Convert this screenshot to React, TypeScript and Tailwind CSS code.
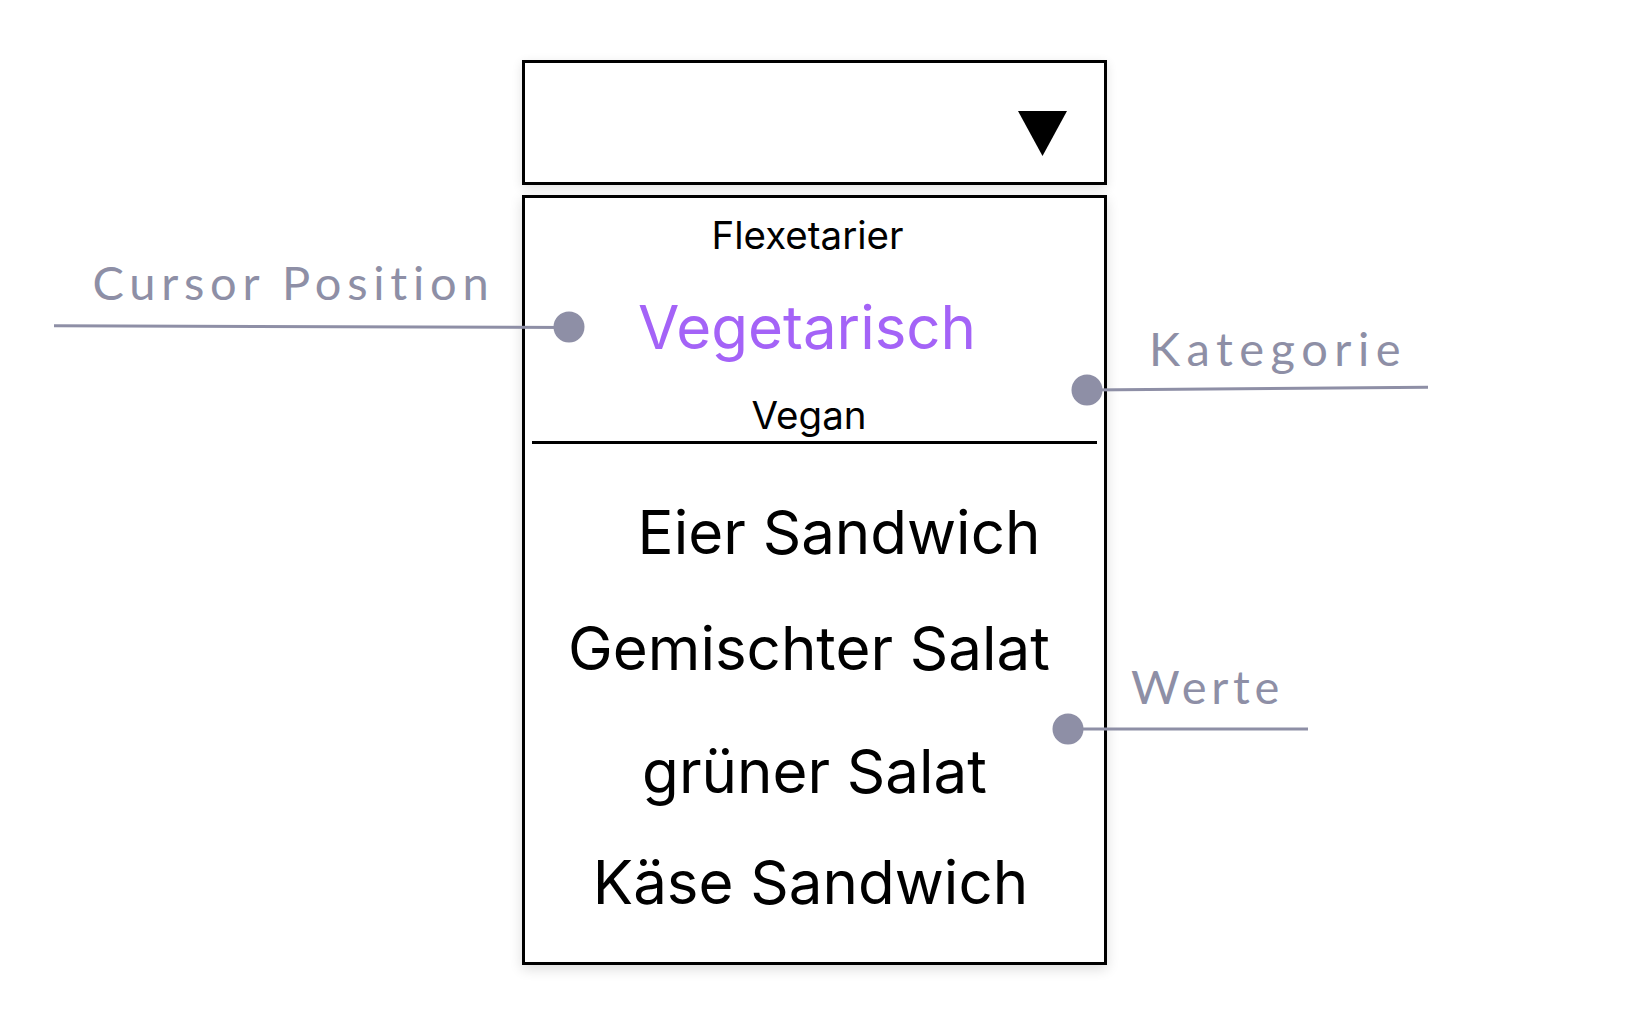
import React from "react";

const inter = { fontFamily: "Inter, 'Noto Sans', sans-serif" };
const label = { fontFamily: "Lato, 'Open Sans', sans-serif" };

function SelectBox() {
  return (
    <div className="flex h-[125px] justify-end border-[3px] border-black bg-white pr-[37px] pt-[48px] shadow-[0_3px_10px_rgba(0,0,0,0.12)]">
      {/* Dropdown arrow */}
      <svg width="49" height="45" viewBox="0 0 49 45">
        <polygon points="0,0 49,0 24.5,45" fill="#000" />
      </svg>
    </div>
  );
}

function ListBox() {
  return (
    <div
      className="mt-[10px] flex h-[770px] flex-col border-[3px] border-black bg-white text-center text-black shadow-[0_4px_12px_rgba(0,0,0,0.14)]"
      style={inter}
    >
      {/* Kategorien */}
      <div className="mt-[18px] pr-[14px] text-[38.5px] leading-none">Flexetarier</div>
      <div className="mt-[42px] pr-[15px] text-[60px] leading-none text-[#a463f7]">Vegetarisch</div>
      <div className="mt-[39px] pr-[11px] text-[38.5px] leading-none">Vegan</div>
      <div className="mx-[7px] mt-[6.5px] h-[3px] bg-black" />

      {/* Werte */}
      <div className="mt-[58.4px] pl-[49px] text-[60px] leading-none">Eier Sandwich</div>
      <div className="mt-[56.6px] pr-[11px] text-[60px] leading-none">Gemischter Salat</div>
      <div className="mt-[63px] text-[60px] leading-none">grüner Salat</div>
      <div className="mt-[51px] pr-[8px] text-[60px] leading-none">Käse Sandwich</div>
    </div>
  );
}

function Annotations() {
  const c = "#8e8fa6";
  return (
    <>
      <svg className="pointer-events-none absolute left-0 top-0" width="1629" height="1026">
        <line x1="54" y1="325.7" x2="569" y2="327.5" stroke={c} strokeWidth="3" />
        <circle cx="569" cy="327" r="15.5" fill={c} />
        <line x1="1087" y1="390" x2="1428" y2="387.3" stroke={c} strokeWidth="3" />
        <circle cx="1087" cy="390" r="15.5" fill={c} />
        <line x1="1068" y1="729" x2="1308" y2="729" stroke={c} strokeWidth="3" />
        <circle cx="1068" cy="729" r="15.5" fill={c} />
      </svg>
      <div
        className="absolute left-[92.5px] top-[259px] text-[47px] leading-none tracking-[5.75px] text-[#8e8fa6]"
        style={label}
      >
        Cursor Position
      </div>
      <div
        className="absolute left-[1149px] top-[325px] text-[47px] leading-none tracking-[6.5px] text-[#8e8fa6]"
        style={label}
      >
        Kategorie
      </div>
      <div
        className="absolute left-[1131px] top-[663px] text-[47px] leading-none tracking-[4.7px] text-[#8e8fa6]"
        style={label}
      >
        Werte
      </div>
    </>
  );
}

export default function App() {
  return (
    <div className="relative h-[1026px] w-full overflow-hidden bg-white">
      <div className="ml-[522px] w-[585px] pt-[60px]">
        <SelectBox />
        <ListBox />
      </div>
      <Annotations />
    </div>
  );
}
